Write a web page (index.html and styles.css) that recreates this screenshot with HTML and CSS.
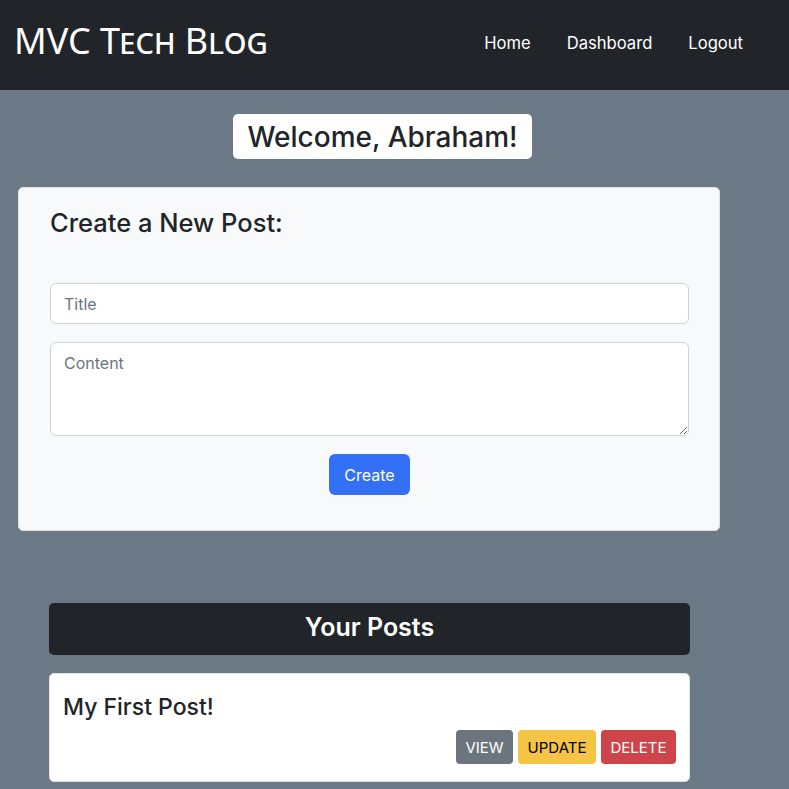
FILE: index.html
```html
<!DOCTYPE html>
<html lang="en">
<head>
<meta charset="utf-8">
<title>MVC Tech Blog</title>
<link rel="stylesheet" href="styles.css">
</head>
<body>
<header class="topbar">
  <div class="brand">MVC Tech Blog</div>
  <nav class="nav">
    <a href="#" class="nav-link">Home</a>
    <a href="#" class="nav-link">Dashboard</a>
    <a href="#" class="nav-link">Logout</a>
  </nav>
</header>
<main class="main">
  <div class="welcome-row">
    <h2 class="welcome">Welcome, Abraham!</h2>
  </div>
  <section class="form-card">
    <h3 class="form-title">Create a New Post:</h3>
    <form class="post-form">
      <input class="field" type="text" placeholder="Title">
      <textarea class="field area" placeholder="Content"></textarea>
      <div class="btn-row"><button type="button" class="btn-create">Create</button></div>
    </form>
  </section>
  <section class="posts">
    <h3 class="posts-head">Your Posts</h3>
    <article class="post-card">
      <h4 class="post-title">My First Post!</h4>
      <div class="actions">
        <button type="button" class="act view">VIEW</button>
        <button type="button" class="act update">UPDATE</button>
        <button type="button" class="act delete">DELETE</button>
      </div>
    </article>
  </section>
</main>
</body>
</html>
```
FILE: styles.css
```css
* { box-sizing: border-box; }
html, body { margin: 0; padding: 0; }
body {
  background: #6b7886;
  font-family: Inter, "Liberation Sans", sans-serif;
  color: #212529;
  height: 789px;
  overflow: hidden;
}
.topbar {
  height: 90px;
  background: #212529;
  display: flex;
  align-items: center;
  justify-content: space-between;
  padding: 0 46px 0 14px;
}
.brand {
  font-family: "Noto Sans", sans-serif;
  font-variant: small-caps;
  font-size: 36px;
  color: #fff;
  line-height: 1;
  margin-top: -8px;
}
.nav { display: flex; gap: 36px; margin-top: -4px; }
.nav-link {
  color: #fff;
  text-decoration: none;
  font-size: 16.6px;
}
.main { padding: 24px 0 0 0; }
.welcome-row { display: flex; justify-content: center; padding-right: 24px; }
.welcome {
  margin: 0;
  background: #fff;
  border-radius: 5px;
  height: 45px;
  padding: 0 14px;
  display: flex;
  align-items: center;
  font-size: 28px;
  font-weight: 500;
}
.form-card {
  margin: 28px 0 0 18px;
  width: 702px;
  height: 344px;
  background: #f8f9fa;
  border: 1px solid #dee2e6;
  border-radius: 5px;
  padding: 17px 30px 0 31px;
}
.form-title {
  margin: 0;
  font-size: 25.5px;
  font-weight: 500;
  line-height: 36px;
}
.post-form { margin-top: 42px; display: flex; flex-direction: column; gap: 18px; }
.field {
  display: block;
  width: 639px;
  height: 41px;
  border: 1px solid #ced4da;
  border-radius: 6px;
  background: #fff;
  font-family: Inter, "Liberation Sans", sans-serif;
  font-size: 16px;
  padding: 6px 13px;
  color: #212529;
}
.field::placeholder { color: #6c757d; }
.area { height: 94px; resize: vertical; padding-top: 10px; }
.btn-row { display: flex; justify-content: center; }
.btn-create {
  width: 81px;
  height: 41px;
  background: #3470f5;
  color: #fff;
  border: none;
  border-radius: 6px;
  font-family: Inter, "Liberation Sans", sans-serif;
  font-size: 16px;
}
.posts { margin: 72px 0 0 49px; width: 641px; }
.posts-head {
  margin: 0;
  height: 52px;
  background: #212529;
  color: #fff;
  border-radius: 5px;
  display: flex;
  align-items: center;
  justify-content: center;
  font-size: 25px;
  font-weight: 600;
  padding-bottom: 5px;
}
.post-card {
  margin-top: 18px;
  background: #fff;
  border: 1px solid #dee2e6;
  border-radius: 5px;
  height: 109px;
  padding: 18px 13px 0 13px;
}
.post-title { margin: 0; font-size: 23px; font-weight: 500; line-height: 30px; }
.actions { display: flex; justify-content: flex-end; gap: 5px; margin-top: 8px; }
.act {
  height: 34px;
  border: none;
  border-radius: 4px;
  font-family: Inter, "Liberation Sans", sans-serif;
  font-size: 15px;
  padding: 0;
}
.view { background: #6c757d; color: #fff; width: 57px; }
.update { background: #f6c445; color: #000; width: 78px; }
.delete { background: #cd454a; color: #fff; width: 75px; }
```
